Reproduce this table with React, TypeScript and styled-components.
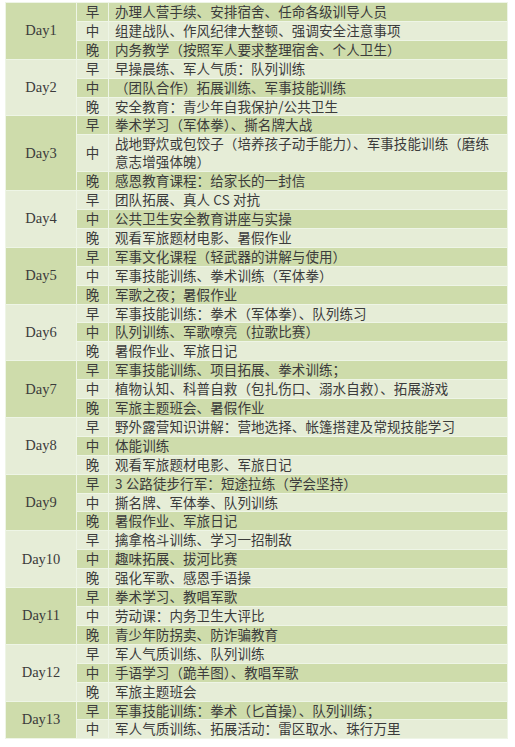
import styled, { createGlobalStyle } from "styled-components";

const GlobalStyle = createGlobalStyle`
  body {
    margin: 0;
    background: #fff;
    font-family: "Noto Sans CJK SC", "Liberation Serif", serif;
    color: #3b3b3b;
  }
`;

const DARK = "#cedcab";
const LIGHT = "#e6edd7";

/**
 * Schedule data
 */
const schedule: { day: string; rows: [string, string][] }[] = [
  {
    day: "Day1",
    rows: [
      ["早", "办理人营手续、安排宿舍、任命各级训导人员"],
      ["中", "组建战队、作风纪律大整顿、强调安全注意事项"],
      ["晚", "内务教学（按照军人要求整理宿舍、个人卫生）"],
    ],
  },
  {
    day: "Day2",
    rows: [
      ["早", "早操晨练、军人气质：队列训练"],
      ["中", "（团队合作）拓展训练、军事技能训练"],
      ["晚", "安全教育：青少年自我保护/公共卫生"],
    ],
  },
  {
    day: "Day3",
    rows: [
      ["早", "拳术学习（军体拳）、撕名牌大战"],
      ["中", "战地野炊或包饺子（培养孩子动手能力）、军事技能训练（磨练\n意志增强体魄）"],
      ["晚", "感恩教育课程：给家长的一封信"],
    ],
  },
  {
    day: "Day4",
    rows: [
      ["早", "团队拓展、真人 CS 对抗"],
      ["中", "公共卫生安全教育讲座与实操"],
      ["晚", "观看军旅题材电影、暑假作业"],
    ],
  },
  {
    day: "Day5",
    rows: [
      ["早", "军事文化课程（轻武器的讲解与使用）"],
      ["中", "军事技能训练、拳术训练（军体拳）"],
      ["晚", "军歌之夜；暑假作业"],
    ],
  },
  {
    day: "Day6",
    rows: [
      ["早", "军事技能训练：拳术（军体拳）、队列练习"],
      ["中", "队列训练、军歌嘹亮（拉歌比赛）"],
      ["晚", "暑假作业、军旅日记"],
    ],
  },
  {
    day: "Day7",
    rows: [
      ["早", "军事技能训练、项目拓展、拳术训练；"],
      ["中", "植物认知、科普自救（包扎伤口、溺水自救）、拓展游戏"],
      ["晚", "军旅主题班会、暑假作业"],
    ],
  },
  {
    day: "Day8",
    rows: [
      ["早", "野外露营知识讲解：营地选择、帐篷搭建及常规技能学习"],
      ["中", "体能训练"],
      ["晚", "观看军旅题材电影、军旅日记"],
    ],
  },
  {
    day: "Day9",
    rows: [
      ["早", "3 公路徒步行军：短途拉练（学会坚持）"],
      ["中", "撕名牌、军体拳、队列训练"],
      ["晚", "暑假作业、军旅日记"],
    ],
  },
  {
    day: "Day10",
    rows: [
      ["早", "擒拿格斗训练、学习一招制敌"],
      ["中", "趣味拓展、拔河比赛"],
      ["晚", "强化军歌、感恩手语操"],
    ],
  },
  {
    day: "Day11",
    rows: [
      ["早", "拳术学习、教唱军歌"],
      ["中", "劳动课：内务卫生大评比"],
      ["晚", "青少年防拐卖、防诈骗教育"],
    ],
  },
  {
    day: "Day12",
    rows: [
      ["早", "军人气质训练、队列训练"],
      ["中", "手语学习（跪羊图）、教唱军歌"],
      ["晚", "军旅主题班会"],
    ],
  },
  {
    day: "Day13",
    rows: [
      ["早", "军事技能训练：拳术（匕首操）、队列训练；"],
      ["中", "军人气质训练、拓展活动：雷区取水、珠行万里"],
    ],
  },
];

const Page = styled.div`
  padding: 2px 0 0 5px;
  height: 747px;
  overflow: hidden;
  box-sizing: border-box;
`;

const Table = styled.div`
  width: 503px;
  display: grid;
  grid-template-columns: 70px 31px 1fr;
  gap: 1px;
  padding: 1px;
  background: #eef5e6;
  box-sizing: border-box;
`;

const DayCell = styled.div<{ $span: number; $dark: boolean }>`
  grid-row: span ${(p) => p.$span};
  background: ${(p) => (p.$dark ? DARK : LIGHT)};
  display: flex;
  align-items: center;
  justify-content: center;
  font-family: "Liberation Serif", serif;
  font-size: 14.5px;
  color: #3b3b3b;
`;

const ShiftCell = styled.div<{ $dark: boolean }>`
  background: ${(p) => (p.$dark ? DARK : LIGHT)};
  display: flex;
  align-items: center;
  justify-content: center;
  font-size: 13.5px;
  line-height: 17.9px;
`;

const TextCell = styled.div<{ $dark: boolean }>`
  background: ${(p) => (p.$dark ? DARK : LIGHT)};
  padding-left: 6px;
  font-size: 13.5px;
  line-height: 17.9px;
  white-space: pre-line;
  letter-spacing: 0.1px;
`;

const App = () => {
  let index = 0;
  return (
    <Page>
      <GlobalStyle />
      <Table>
        {schedule.map((block, b) => (
          <>
            <DayCell key={block.day} $span={block.rows.length} $dark={b % 2 === 0}>
              {block.day}
            </DayCell>
            {block.rows.map(([shift, text]) => {
              const dark = index % 2 === 0;
              index += 1;
              return (
                <>
                  <ShiftCell $dark={dark}>{shift}</ShiftCell>
                  <TextCell $dark={dark}>{text}</TextCell>
                </>
              );
            })}
          </>
        ))}
      </Table>
    </Page>
  );
};

export default App;
